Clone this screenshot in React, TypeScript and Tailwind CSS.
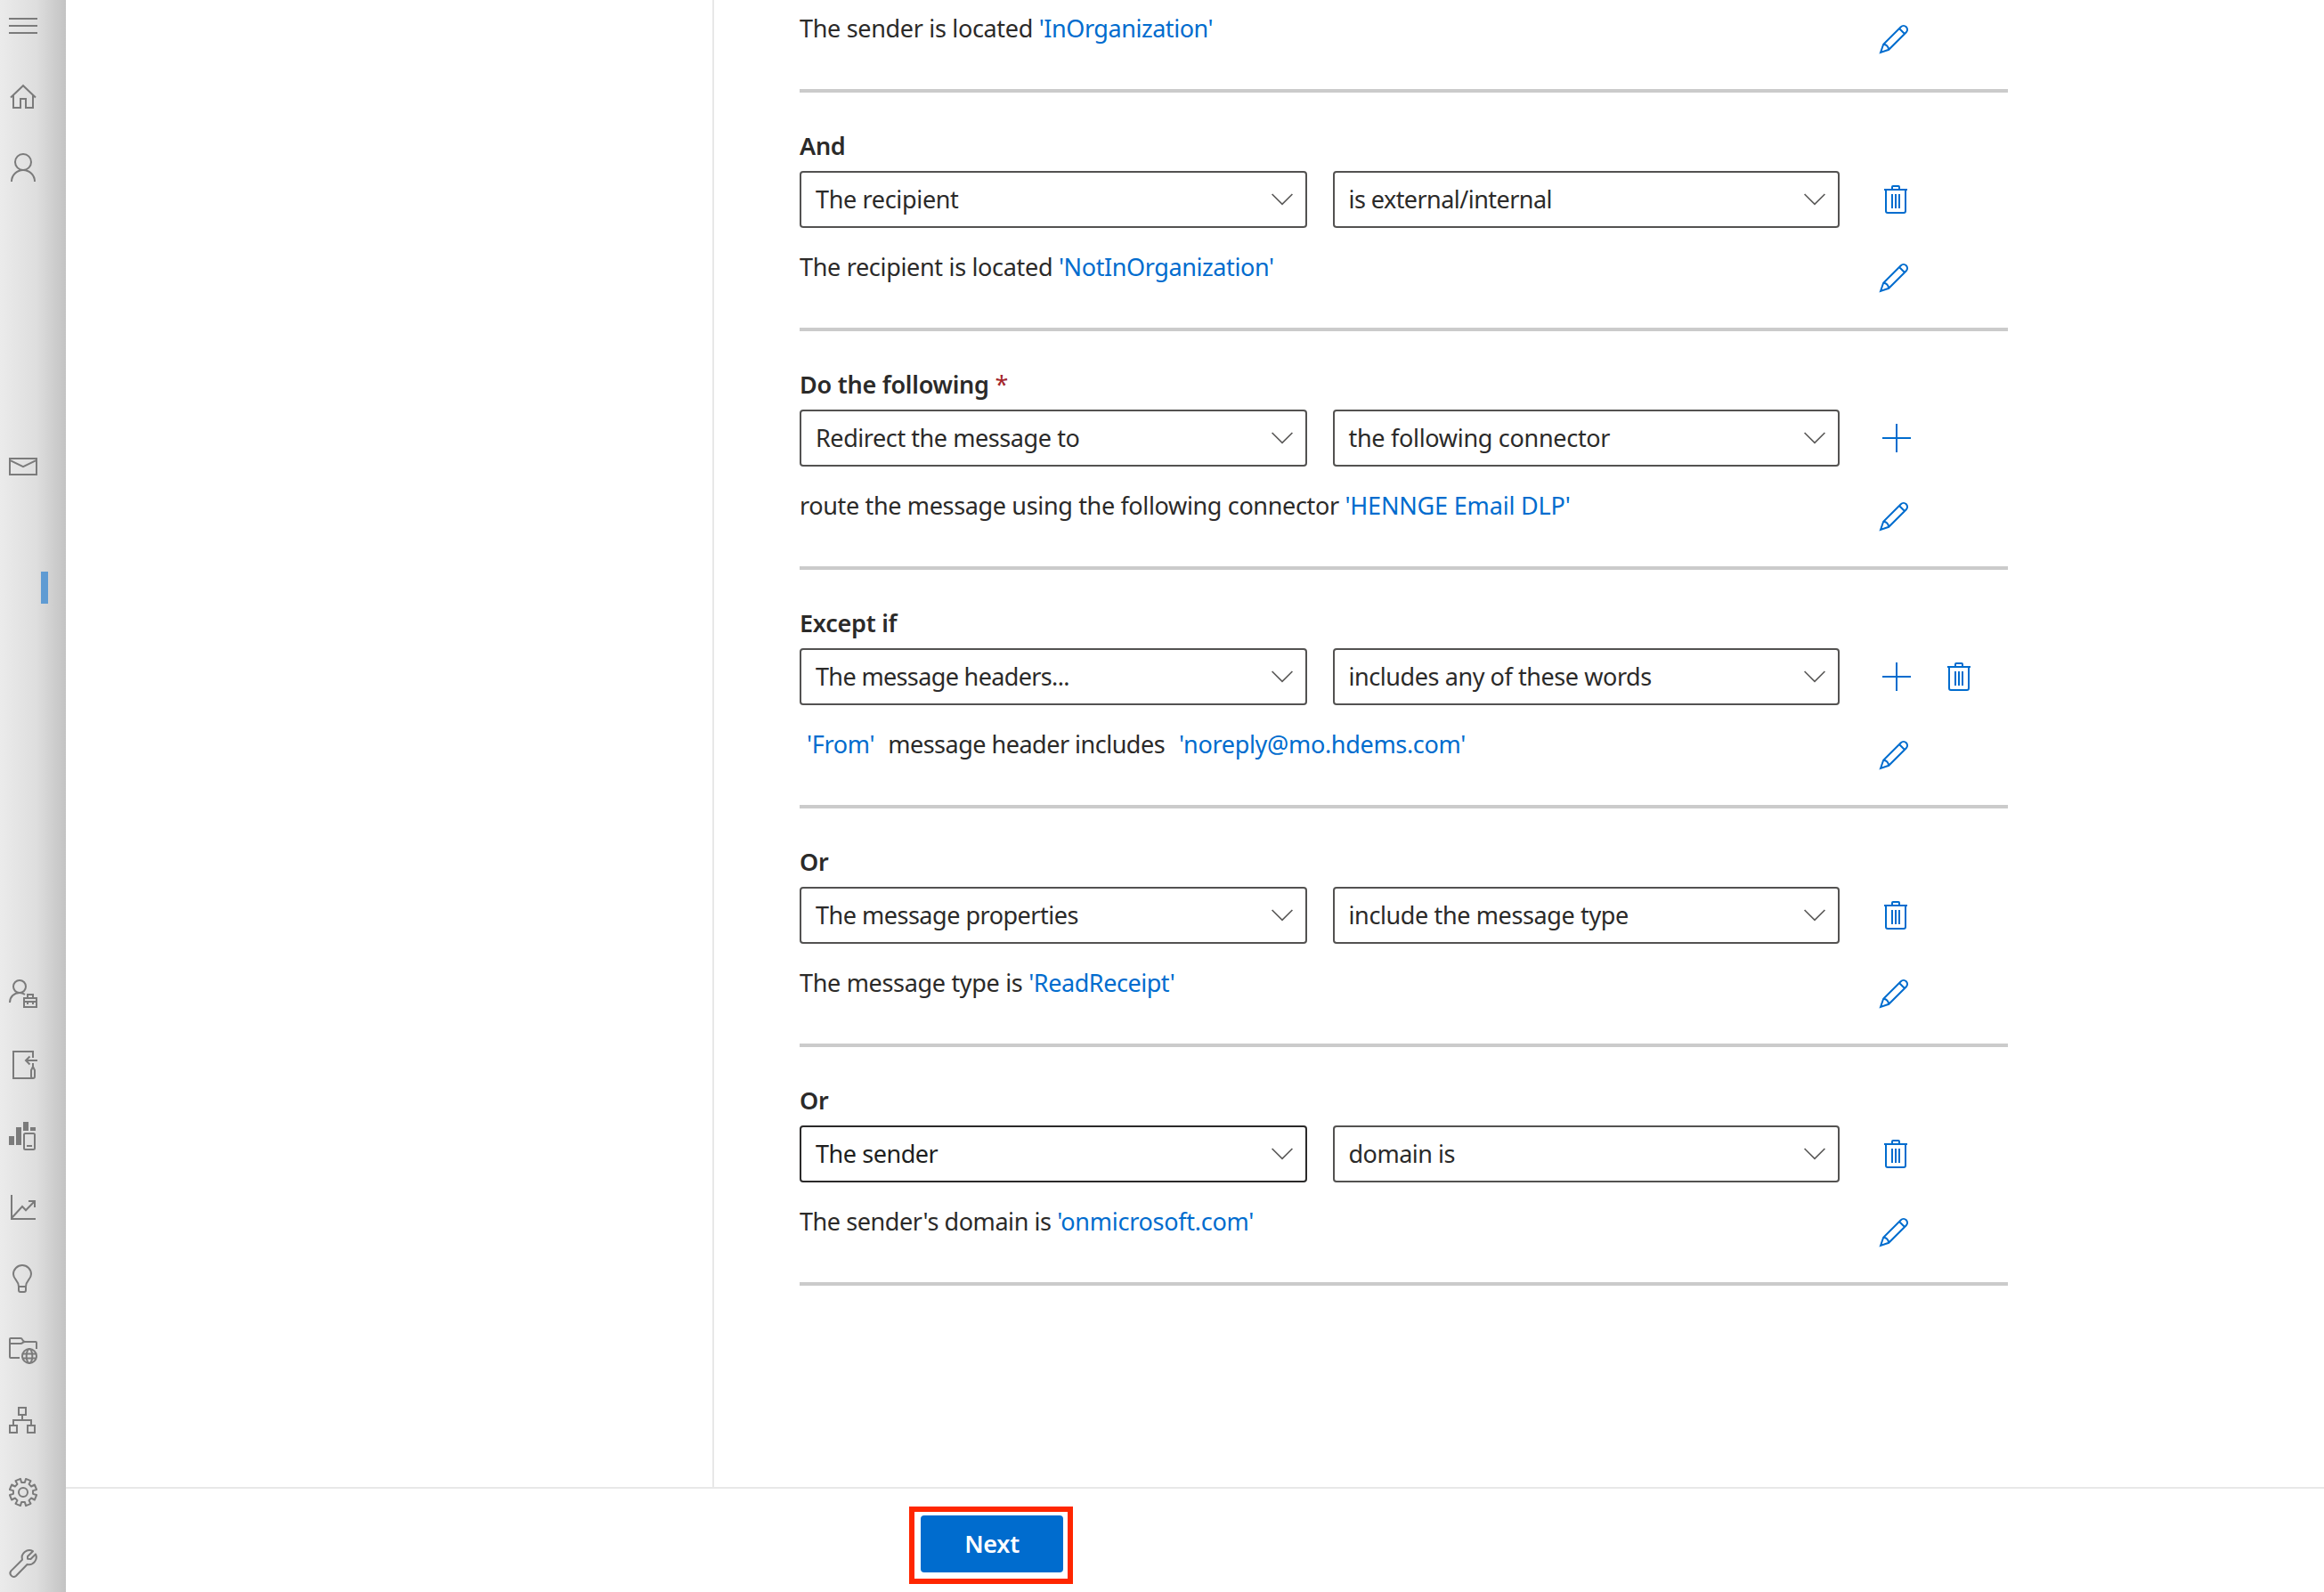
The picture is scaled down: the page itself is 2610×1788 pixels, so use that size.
import { ReactNode } from "react";

interface IconProps {
  children: ReactNode;
  className?: string;
}

function Icon(props: IconProps) {
  return (
    <svg
      viewBox="0 0 32 32"
      fill="none"
      stroke="currentColor"
      strokeWidth={2}
      className={`size-8 shrink-0 overflow-visible ${props.className ?? ""}`}
    >
      {props.children}
    </svg>
  );
}

function gearPath() {
  const points: string[] = [];
  for (let i = 0; i < 8; i++) {
    const center = 22.5 + i * 45;
    const corners = [
      [-13, 11.2],
      [-11, 15.4],
      [11, 15.4],
      [13, 11.2],
    ];
    for (const [offset, radius] of corners) {
      const angle = ((center + offset) * Math.PI) / 180;
      const x = 16 + radius * Math.cos(angle);
      const y = 16 + radius * Math.sin(angle);
      points.push(`${x.toFixed(2)} ${y.toFixed(2)}`);
    }
  }
  return `M${points.join("L")}Z`;
}

function Sidebar() {
  return (
    <nav className="flex w-[74px] shrink-0 flex-col bg-linear-to-r from-[#ebebeb] via-[#dedede] via-55% to-[#c3c3c3] pl-[10px] pt-3 text-[#7b7b7b]">
      <div className="flex flex-col gap-12">
        <Icon>
          <path d="M0 9h32M0 17h32M0 25h32" />
        </Icon>
        <Icon>
          <path d="M2 17.5L16 4.2l14 13.3M5 15v14h8V19h6v10h8V15" />
        </Icon>
        <Icon>
          <circle cx="16" cy="10" r="9" />
          <path d="M3 32a13 13 0 0 1 26 0" />
        </Icon>
      </div>
      <Icon className="mt-[304px]">
        <path d="M1 7h30v18H1zM1 8.8l15 7.4 15-7.4" />
      </Icon>
      <div className="ml-9 mt-[102px] h-9 w-2 bg-[#5f9bd3]" />
      <div className="mt-[422px] flex flex-col gap-12">
        <Icon>
          <circle cx="12" cy="8" r="7" />
          <path d="M1 26C1 19.500 6 15 12 15q3.300 0 6 2M17 21h14v10H17zM21 21v-4h6v4M17 25h14M21 25v3M27 25v3" />
        </Icon>
        <Icon>
          <path d="M27 8V1H5v30h22M32 11H19M23.500 6.500L19 11l4.500 4.500M27 14v4M27 18l-2 4v7a2 2 0 0 0 4 0v-7z" />
        </Icon>
        <Icon>
          <path
            d="M0 16h6v10H0zM8 6h6v20H8zM16 0h6v10h-6zM24 6h6v4h-6z"
            fill="currentColor"
            stroke="none"
          />
          <rect x="17" y="13" width="12" height="18" rx="1.5" />
          <path d="M20 27h6" />
        </Icon>
        <Icon>
          <path d="M3 2v27h27M3.500 27.500L15 15l4 4.300L29 9M22 9h7v7" />
        </Icon>
        <Icon>
          <path d="M11 25C11 18 5 17 5 11a10 10 0 0 1 20 0C25 17 19 18 19 25v4a2 2 0 0 1-2 2h-4a2 2 0 0 1-2-2zM11 25h8" />
        </Icon>
        <Icon>
          <path d="M12 25H2a1 1 0 0 1-1-1V4a1 1 0 0 1 1-1h11q1.500 0 2.300 1.800T18 7h12a1 1 0 0 1 1 1v7M1 9h12q1.500 0 2.500-1T18 7" />
          <circle cx="23" cy="23" r="8" />
          <ellipse cx="23" cy="23" rx="3.300" ry="8" />
          <path d="M15.500 20.500h15M15.500 25.500h15" />
        </Icon>
        <Icon>
          <path d="M11 1h8v8h-8zM15 9v6M5 21v-6h20v6M1 21h8v8H1zM21 21h8v8h-8z" />
        </Icon>
        <Icon>
          <path d={gearPath()} strokeLinejoin="round" />
          <circle cx="16" cy="16" r="5" />
        </Icon>
        <Icon>
          <path
            d="M27 2.200A8.300 8.300 0 0 0 15 11.800L2.300 24.400a4 4 0 0 0 5.600 5.600L20.600 17A8.300 8.300 0 0 0 30 5.500L24.500 11 21 10.800 21 8z"
            strokeLinejoin="round"
          />
        </Icon>
      </div>
    </nav>
  );
}

function PencilIcon() {
  return (
    <Icon>
      <path d="M1 31l3.200-9.300L23.800 2.200a4 4 0 0 1 6 6L10.200 27.800zM4.200 21.700c3.500.3 5.500 2.800 6 6.100M22 4l6 6" />
    </Icon>
  );
}

function PlusIcon() {
  return (
    <Icon>
      <path d="M16 0v32M0 16h32" />
    </Icon>
  );
}

function TrashIcon() {
  return (
    <Icon>
      <path d="M2 5h26M11 5V2a1 1 0 0 1 1-1h6a1 1 0 0 1 1 1v3M4 5v24a2 2 0 0 0 2 2h18a2 2 0 0 0 2-2V5M11 10v16M15 10v16M19 10v16" />
    </Icon>
  );
}

interface SelectProps {
  value: string;
  className?: string;
  focused?: boolean;
}

function Select(props: SelectProps) {
  return (
    <div
      className={`flex h-16 flex-1 items-center justify-between rounded border-2 pl-4 pr-[14px] ${
        props.focused
          ? "border-[#2b2a2a] text-[#201f1e]"
          : "border-[#535251]"
      }`}
    >
      <span className={`whitespace-nowrap ${props.className ?? ""}`}>
        {props.value}
      </span>
      <svg
        viewBox="0 0 24 14"
        fill="none"
        stroke="#5c5b5a"
        strokeWidth={1.7}
        className="h-[14px] w-6"
      >
        <path d="M.6 1L12 12.400 23.400 1" />
      </svg>
    </div>
  );
}

function Summary(props: { children: ReactNode; className?: string }) {
  return (
    <div
      className={`flex h-[116px] justify-between border-b-4 border-[#cbcbcb] pr-28 pt-6 ${
        props.className ?? ""
      }`}
    >
      <p className="whitespace-pre leading-10 tracking-[-0.32px]">
        {props.children}
      </p>
      <div className="pt-4 text-[#006cce]">
        <PencilIcon />
      </div>
    </div>
  );
}

function Value(props: { children: ReactNode; className?: string }) {
  return (
    <span className={`text-[#006cce] ${props.className ?? ""}`}>
      {props.children}
    </span>
  );
}

interface RuleProps {
  label: ReactNode;
  first: ReactNode;
  second: ReactNode;
  actions: ReactNode;
  children: ReactNode;
}

function Rule(props: RuleProps) {
  return (
    <section>
      <div className="h-[88px] pt-10 font-semibold leading-10 tracking-[-0.25px]">
        {props.label}
      </div>
      <div className="flex">
        <div className="flex w-[1168px] gap-[29px]">
          {props.first}
          {props.second}
        </div>
        <div className="ml-12 flex items-center gap-[39px] text-[#006cce]">
          {props.actions}
        </div>
      </div>
      <Summary>{props.children}</Summary>
    </section>
  );
}

export default function App() {
  return (
    <div className="flex h-[1788px] w-[2610px] overflow-hidden bg-white font-['Noto_Sans','Open_Sans',sans-serif] text-[27px] text-[#2b2a29]">
      <Sidebar />
      <div className="flex flex-1 flex-col">
        <div className="flex h-[1670px]">
          <aside className="w-[728px] border-r-2 border-[#e8e8e8]" />
          <main className="ml-24 w-[1357px]">
            <Summary className="-mt-3">
              The sender is located{" "}
              <Value className="tracking-[-0.45px]">'InOrganization'</Value>
            </Summary>
            <Rule
              label="And"
              first={
                <Select value="The recipient" className="tracking-[-0.34px]" />
              }
              second={
                <Select
                  value="is external/internal"
                  className="tracking-[-0.55px]"
                />
              }
              actions={<TrashIcon />}
            >
              The recipient is located{" "}
              <Value className="tracking-[-0.4px]">'NotInOrganization'</Value>
            </Rule>
            <Rule
              label={
                <>
                  Do the following{" "}
                  <span className="font-normal text-[#a4262c]">*</span>
                </>
              }
              first={
                <Select
                  value="Redirect the message to"
                  className="tracking-[-0.43px]"
                />
              }
              second={
                <Select
                  value="the following connector"
                  className="tracking-[-0.3px]"
                />
              }
              actions={<PlusIcon />}
            >
              <span className="tracking-[-0.35px]">
                route the message using the following connector{" "}
              </span>
              <Value className="tracking-[-0.18px]">'HENNGE Email DLP'</Value>
            </Rule>
            <Rule
              label="Except if"
              first={
                <Select
                  value="The message headers..."
                  className="tracking-[-0.64px]"
                />
              }
              second={
                <Select
                  value="includes any of these words"
                  className="tracking-[-0.43px]"
                />
              }
              actions={
                <>
                  <PlusIcon />
                  <TrashIcon />
                </>
              }
            >
              <Value className="ml-2">'From'</Value>
              <span className="ml-[15px] mr-4 tracking-[-0.5px]">
                message header includes
              </span>
              <Value>'noreply@mo.hdems.com'</Value>
            </Rule>
            <Rule
              label="Or"
              first={
                <Select
                  value="The message properties"
                  className="tracking-[-0.49px]"
                />
              }
              second={
                <Select
                  value="include the message type"
                  className="tracking-[-0.38px]"
                />
              }
              actions={<TrashIcon />}
            >
              The message type is{" "}
              <Value className="tracking-[-0.45px]">'ReadReceipt'</Value>
            </Rule>
            <Rule
              label="Or"
              first={
                <Select
                  value="The sender"
                  className="tracking-[-0.45px]"
                  focused
                />
              }
              second={
                <Select value="domain is" className="tracking-[-0.5px]" />
              }
              actions={<TrashIcon />}
            >
              <span className="tracking-[-0.43px]">
                The sender's domain is{" "}
              </span>
              <Value className="tracking-[-0.27px]">'onmicrosoft.com'</Value>
            </Rule>
          </main>
        </div>
        <footer className="flex-1 border-t-2 border-[#e8e8e8] pl-[947px] pt-5">
          <div className="h-[87px] w-[184px] border-[6px] border-[#ff2600] pl-[7px] pt-1">
            <button className="h-16 w-40 rounded bg-[#006cce] font-semibold tracking-[-0.25px] text-white">
              Next
            </button>
          </div>
        </footer>
      </div>
    </div>
  );
}
